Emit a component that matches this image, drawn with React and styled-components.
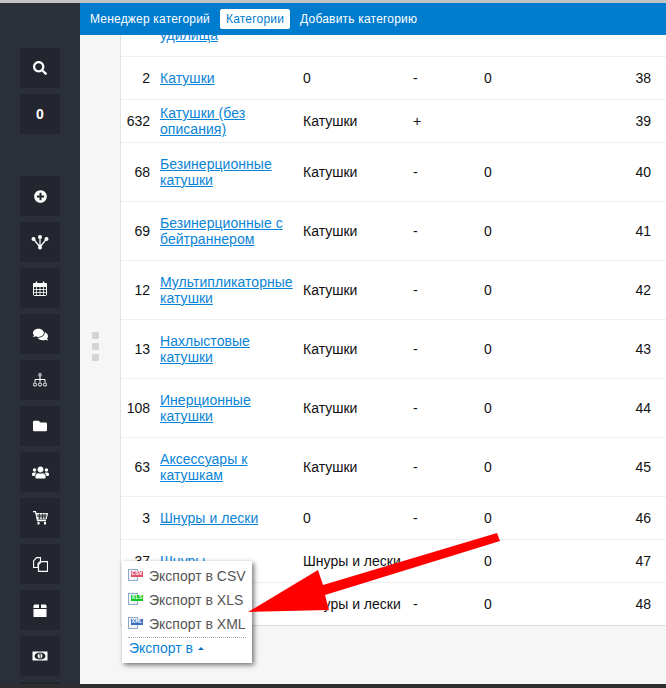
import styled, { createGlobalStyle } from 'styled-components'
import { FaSearch, FaPlusCircle, FaComments, FaFolder, FaUsers } from 'react-icons/fa'

const GlobalStyle = createGlobalStyle`
    html, body {
        margin: 0;
        padding: 0;
        height: 100%;
        overflow: hidden;
        background: #2b2f3a;
    }
    body {
        font-family: "Liberation Sans", Arial, sans-serif;
    }
`

const Page = styled.div`
    position: relative;
    display: flex;
    flex-direction: column;
    width: 666px;
    height: 688px;
    overflow: hidden;
`
const TopStrip = styled.div`
    height: 3px;
    background: #c4c4c4;
    flex: none;
`
const BottomStrip = styled.div`
    height: 4px;
    background: #2e2e2e;
    flex: none;
`
const Main = styled.div`
    display: flex;
    flex: 1;
    min-height: 0;
`
const Sidebar = styled.nav`
    width: 80px;
    flex: none;
    display: flex;
    flex-direction: column;
    align-items: center;
    gap: 6px;
    padding-top: 45px;
    box-sizing: border-box;
    overflow: hidden;
    background: #2b2f3a;
`
const SideButton = styled.div`
    width: 40px;
    height: 40px;
    flex: none;
    display: flex;
    align-items: center;
    justify-content: center;
    background: #23262e;
    color: #fff;
    font-size: 14px;
    font-weight: bold;
    margin-top: ${({ $gap }) => ($gap ? '36px' : '0')};
`
const Content = styled.div`
    flex: 1;
    min-width: 0;
    display: flex;
    flex-direction: column;
    background: #f6f6f6;
`
const Header = styled.div`
    height: 32px;
    flex: none;
    display: flex;
    align-items: center;
    gap: 4px;
    padding-left: 4px;
    background: #007ccf;
`
const Tab = styled.a`
    height: 20px;
    line-height: 20px;
    padding: 0 6px;
    border-radius: 2px;
    font-size: 12px;
    letter-spacing: 0.2px;
    color: ${({ $active }) => ($active ? '#007ccf' : '#fff')};
    background: ${({ $active }) => ($active ? '#fff' : 'transparent')};
`
const Body = styled.div`
    flex: 1;
    min-height: 0;
    display: flex;
`
const Gutter = styled.div`
    width: 40px;
    flex: none;
    display: flex;
    flex-direction: column;
    align-items: center;
    justify-content: center;
    gap: 4px;
    padding: 0 9px 26px 0;
    box-sizing: border-box;
`
const Dot = styled.span`
    width: 7px;
    height: 7px;
    border-radius: 1px;
    background: #d4d4d4;
`
const TableArea = styled.div`
    flex: 1;
    min-width: 0;
    overflow: hidden;
`
const Table = styled.table`
    width: 546px;
    margin-top: -37px;
    table-layout: fixed;
    border-collapse: separate;
    border-spacing: 0;
    border-left: 1px solid #e2e2e2;
    background: #fff;
    font-size: 14px;
    line-height: 16px;
    color: #111;
`
const Row = styled.tr`
    height: ${({ $tall }) => ($tall ? '59px' : '43px')};
`
const Cell = styled.td`
    padding: 0 5px;
    box-sizing: border-box;
    border-bottom: 1px solid ${({ $last }) => ($last ? '#dcdcdc' : '#efefef')};
    text-align: ${({ $right }) => ($right ? 'right' : 'left')};
    vertical-align: middle;
`
const NumCell = styled(Cell)`
    padding-right: 15px;
`
const CategoryLink = styled.a`
    color: #0a84d6;
    text-decoration: underline;
    letter-spacing: 0.04px;
`
const ExportMenu = styled.div`
    position: absolute;
    left: 122px;
    top: 561px;
    width: 130px;
    height: 102px;
    padding: 3px 6px 0;
    box-sizing: border-box;
    background: #fff;
    box-shadow: 2px 2px 5px rgba(0, 0, 0, 0.55);
    font-size: 14px;
`
const MenuItem = styled.div`
    display: flex;
    align-items: center;
    gap: 6px;
    height: 24px;
    color: #555;
    white-space: nowrap;
`
const FileIcon = styled.span`
    position: relative;
    width: 15px;
    height: 16px;
    flex: none;
`
const FileSheet = styled.span`
    position: absolute;
    left: 0;
    top: 1px;
    width: 8px;
    height: 10px;
    background: #f2f4f8;
    border: 1px solid #8fa9c6;
`
const FileBadge = styled.span`
    position: absolute;
    left: 3px;
    top: 3px;
    width: 12px;
    height: 6px;
    background: ${({ $color }) => $color};
    color: #fff;
    font: bold 6px/6px "Liberation Mono", monospace;
    text-align: center;
    overflow: hidden;
`
const MenuFooter = styled.div`
    display: flex;
    align-items: center;
    gap: 5px;
    margin-top: 1px;
    padding: 0 0 2px 1px;
    height: 23px;
    box-sizing: border-box;
    border-top: 1px dotted #aaa;
    color: #0a84d6;
`
const Caret = styled.span`
    width: 0;
    height: 0;
    border-left: 3px solid transparent;
    border-right: 3px solid transparent;
    border-bottom: 3px solid #0a6fc0;
`
const Arrow = styled.svg`
    position: absolute;
    left: 0;
    top: 0;
    pointer-events: none;
`

const NetworkIcon = () => (
    <svg width="18" height="16" viewBox="0 0 18 16" fill="#fff">
        <circle cx="9" cy="3" r="2" />
        <circle cx="2.5" cy="5" r="2" />
        <circle cx="15.5" cy="5" r="2" />
        <circle cx="9" cy="13.5" r="2" />
        <path d="M9 3v10M2.5 5L9 13M15.5 5L9 13" stroke="#fff" strokeWidth="1.2" />
    </svg>
)
const CalendarIcon = () => (
    <svg width="14" height="15" viewBox="0 0 14 15" fill="none" stroke="#fff">
        <rect x="0.5" y="2.5" width="13" height="12" rx="1" />
        <path d="M0.5 2.5h13v3h-13z" fill="#fff" />
        <path d="M0.5 8.5h13M0.5 11.5h13M3.5 5v10M7 5v10M10.5 5v10" strokeWidth="0.8" />
        <path d="M3.5 0.5v3M10.5 0.5v3" strokeWidth="1.4" />
    </svg>
)
const TreeIcon = () => (
    <svg width="14" height="14" viewBox="0 0 14 14" fill="none" stroke="#fff" strokeWidth="1">
        <circle cx="7" cy="1.8" r="1.3" />
        <path d="M7 3v6M2 9V6.5h10V9" />
        <circle cx="2" cy="11.5" r="1.6" />
        <circle cx="7" cy="11.5" r="1.6" />
        <circle cx="12" cy="11.5" r="1.6" />
    </svg>
)
const CartIcon = () => (
    <svg width="15" height="14" viewBox="0 0 15 14" fill="none" stroke="#fff">
        <path d="M0 0.7h2.5l2 9h8.5" strokeWidth="1.2" />
        <path d="M3.4 2.5H14.5l-1.3 5.5H4.5z" fill="#fff" fillOpacity="0.55" />
        <path d="M3.5 5h10M6.5 2.5v5.5M9.5 2.5v5.5M12 2.5v5.5" stroke="#23262e" strokeWidth="0.8" />
        <rect x="4.5" y="11" width="2" height="2.5" fill="#fff" stroke="none" />
        <rect x="11" y="11" width="2" height="2.5" fill="#fff" stroke="none" />
    </svg>
)
const CopyIcon = () => (
    <svg width="15" height="15" viewBox="0 0 15 15" fill="none" stroke="#fff" strokeWidth="1.1">
        <path d="M3.5 0.6h4v3.5L5 6.5v4H0.6V4z" />
        <path d="M8.5 4.6h6v9.8H5.5V7.5z" />
    </svg>
)
const GiftIcon = () => (
    <svg width="14" height="13" viewBox="0 0 14 13" fill="#fff">
        <path d="M1.5 0.5h4.5v3.5H0.5v-2.5zM8 0.5h4.5l1 1v2.5H8z" />
        <rect x="0.5" y="5" width="13" height="8" />
    </svg>
)
const MoneyIcon = () => (
    <svg width="16" height="10" viewBox="0 0 16 10">
        <rect x="0.5" y="0.5" width="15" height="9" fill="#fff" />
        <ellipse cx="8" cy="5" rx="5.5" ry="3.6" fill="#23262e" />
        <circle cx="8" cy="5" r="2.4" fill="#fff" />
        <path d="M7 3.5L8.2 3v4" stroke="#23262e" strokeWidth="0.9" fill="none" />
    </svg>
)

const sideItems = [
    { icon: <FaSearch size={14} /> },
    { icon: '0' },
    { icon: <FaPlusCircle size={13} />, gap: true },
    { icon: <NetworkIcon /> },
    { icon: <CalendarIcon /> },
    { icon: <FaComments size={15} /> },
    { icon: <TreeIcon /> },
    { icon: <FaFolder size={14} /> },
    { icon: <FaUsers size={17} /> },
    { icon: <CartIcon /> },
    { icon: <CopyIcon /> },
    { icon: <GiftIcon /> },
    { icon: <MoneyIcon /> },
    { icon: null },
]

const rows = [
    { id: '1', name: 'Спиннинговые удилища', parent: '0', flag: '-', count: '0', order: 37, tall: true },
    { id: '2', name: 'Катушки', parent: '0', flag: '-', count: '0', order: 38 },
    { id: '632', name: 'Катушки (без описания)', parent: 'Катушки', flag: '+', count: '', order: 39 },
    { id: '68', name: 'Безинерционные катушки', parent: 'Катушки', flag: '-', count: '0', order: 40, tall: true },
    { id: '69', name: 'Безинерционные с бейтраннером', parent: 'Катушки', flag: '-', count: '0', order: 41, tall: true },
    { id: '12', name: 'Мультипликаторные катушки', parent: 'Катушки', flag: '-', count: '0', order: 42, tall: true },
    { id: '13', name: 'Нахлыстовые катушки', parent: 'Катушки', flag: '-', count: '0', order: 43, tall: true },
    { id: '108', name: 'Инерционные катушки', parent: 'Катушки', flag: '-', count: '0', order: 44, tall: true },
    { id: '63', name: 'Аксессуары к катушкам', parent: 'Катушки', flag: '-', count: '0', order: 45, tall: true },
    { id: '3', name: 'Шнуры и лески', parent: '0', flag: '-', count: '0', order: 46 },
    { id: '37', name: 'Шнуры', parent: 'Шнуры и лески', flag: '-', count: '0', order: 47 },
    { id: '38', name: 'Лески', parent: 'Шнуры и лески', flag: '-', count: '0', order: 48 },
]

const exportItems = [
    { label: 'CSV', color: '#e0526b' },
    { label: 'XLS', color: '#0fc81e' },
    { label: 'XML', color: '#3b70c4' },
]

export default function App() {
    return (
        <Page>
            <GlobalStyle />
            <TopStrip />
            <Main>
                <Sidebar>
                    {sideItems.map((item, index) => (
                        <SideButton key={index} $gap={item.gap}>
                            {item.icon}
                        </SideButton>
                    ))}
                </Sidebar>
                <Content>
                    <Header>
                        <Tab>Менеджер категорий</Tab>
                        <Tab $active>Категории</Tab>
                        <Tab>Добавить категорию</Tab>
                    </Header>
                    <Body>
                        <Gutter>
                            <Dot />
                            <Dot />
                            <Dot />
                        </Gutter>
                        <TableArea>
                            <Table>
                                <colgroup>
                                    <col width="34" />
                                    <col width="143" />
                                    <col width="110" />
                                    <col width="71" />
                                    <col width="80" />
                                    <col width="107" />
                                </colgroup>
                                <tbody>
                                    {rows.map((row, index) => {
                                        const last = index === rows.length - 1
                                        return (
                                            <Row key={row.order} $tall={row.tall}>
                                                <Cell $right $last={last}>{row.id}</Cell>
                                                <Cell $last={last}>
                                                    <CategoryLink>{row.name}</CategoryLink>
                                                </Cell>
                                                <Cell $last={last}>{row.parent}</Cell>
                                                <Cell $last={last}>{row.flag}</Cell>
                                                <Cell $last={last}>{row.count}</Cell>
                                                <NumCell $right $last={last}>{row.order}</NumCell>
                                            </Row>
                                        )
                                    })}
                                </tbody>
                            </Table>
                        </TableArea>
                    </Body>
                </Content>
            </Main>
            <BottomStrip />
            <ExportMenu>
                {exportItems.map((item) => (
                    <MenuItem key={item.label}>
                        <FileIcon>
                            <FileSheet />
                            <FileBadge $color={item.color}>{item.label}</FileBadge>
                        </FileIcon>
                        Экспорт в {item.label}
                    </MenuItem>
                ))}
                <MenuFooter>
                    Экспорт в <Caret />
                </MenuFooter>
            </ExportMenu>
            <Arrow width="666" height="688" viewBox="0 0 666 688">
                <polygon
                    points="248,612 318,570 323,585 497,533 500,541 325,595 329,610"
                    fill="#ff0000"
                />
            </Arrow>
        </Page>
    )
}
